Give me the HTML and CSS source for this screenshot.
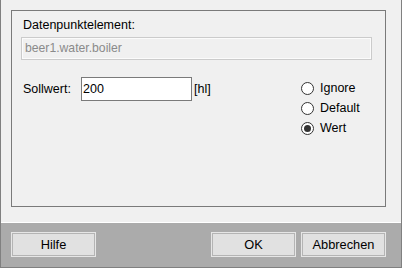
FILE: index.html
```html
<!DOCTYPE html>
<html lang="de">
<head>
    <meta charset="UTF-8">
    <meta name="viewport" content="width=device-width, initial-scale=1.0">
    <title>Sollwert</title>
<link rel="stylesheet" href="styles.css">
</head>
<body>
    <div class="dialog">
        <div class="content">
            <div class="panel">
                <div class="caption">Datenpunktelement:</div>
                <div class="dpe-field">beer1.water.boiler</div>

                <div class="value-row">
                    <div class="value-input">
                        <span class="value-label">Sollwert:</span>
                        <input class="num" type="text" value="200">
                        <span class="unit">[hl]</span>
                    </div>

                    <!-- Modus -->
                    <div class="radios">
                        <label class="radio"><span class="circle"></span>Ignore</label>
                        <label class="radio"><span class="circle"></span>Default</label>
                        <label class="radio"><span class="circle checked"></span>Wert</label>
                    </div>
                </div>
            </div>
        </div>

        <div class="buttons">
            <button class="btn">Hilfe</button>
            <button class="btn ok">OK</button>
            <button class="btn">Abbrechen</button>
        </div>
    </div>
</body>
</html>
```

FILE: styles.css
```css
body {
    margin: 0;
    font-family: 'Liberation Sans', Arial, sans-serif;
    font-size: 12.5px;
    color: #000;
    background: #f0f0f0;
}
.dialog {
    width: 402px;
    height: 268px;
    box-sizing: border-box;
    border-left: 1px solid #808080;
    border-right: 1px solid #808080;
    border-bottom: 1px solid #808080;
    display: flex;
    flex-direction: column;
}
.content {
    height: 222px;
    box-sizing: border-box;
    padding: 10px 15px 0 10px;
    background: #f0f0f0;
}
.panel {
    height: 197px;
    box-sizing: border-box;
    border: 1px solid #7a7a7a;
}
.caption {
    margin: 7px 0 0 11px;
    line-height: 14px;
}
.dpe-field {
    margin: 5px 13px 0 9px;
    height: 23px;
    box-sizing: border-box;
    border: 1px solid #cbcbcb;
    box-shadow: inset 0 0 0 1px #fbfbfb;
    padding-left: 3px;
    line-height: 21px;
    color: #8a8a8a;
    font-size: 12.2px;
}
.value-row {
    display: flex;
    align-items: flex-start;
}
.value-input {
    display: flex;
    align-items: center;
    margin: 17px 0 0 11px;
    height: 24px;
}
.value-label {
    width: 58px;
}
.num {
    width: 111px;
    height: 24px;
    box-sizing: border-box;
    margin: 0;
    border: 1px solid #7a7a7a;
    padding: 0 0 0 1px;
    background: #fff;
    font-family: 'Liberation Sans', Arial, sans-serif;
    font-size: 12.5px;
    color: #000;
    outline: none;
}
.unit {
    margin-left: 2px;
}
.radios {
    margin: 18px 0 0 auto;
    width: 84px;
    display: flex;
    flex-direction: column;
}
.radio {
    display: flex;
    align-items: center;
    height: 20px;
    gap: 6px;
}
.circle {
    width: 13px;
    height: 13px;
    box-sizing: border-box;
    border: 1px solid #333;
    border-radius: 50%;
    background: #fff;
    display: flex;
    align-items: center;
    justify-content: center;
}
.circle.checked::after {
    content: '';
    width: 7px;
    height: 7px;
    border-radius: 50%;
    background: #333;
}
.buttons {
    flex: 1;
    display: flex;
    border-top: 1px solid #fff;
    background: #ababab;
    padding: 9px 15px 0 10px;
    gap: 5px;
}
.btn {
    width: 85px;
    height: 25px;
    margin: 0;
    box-sizing: border-box;
    border: 1px solid #e6e6e6;
    box-shadow: inset 0 0 0 1px #b4b4b4;
    background: #e1e1e1;
    font-family: 'Liberation Sans', Arial, sans-serif;
    font-size: 12.8px;
    color: #000;
    padding: 0;
}
.ok {
    margin-left: auto;
}
```
